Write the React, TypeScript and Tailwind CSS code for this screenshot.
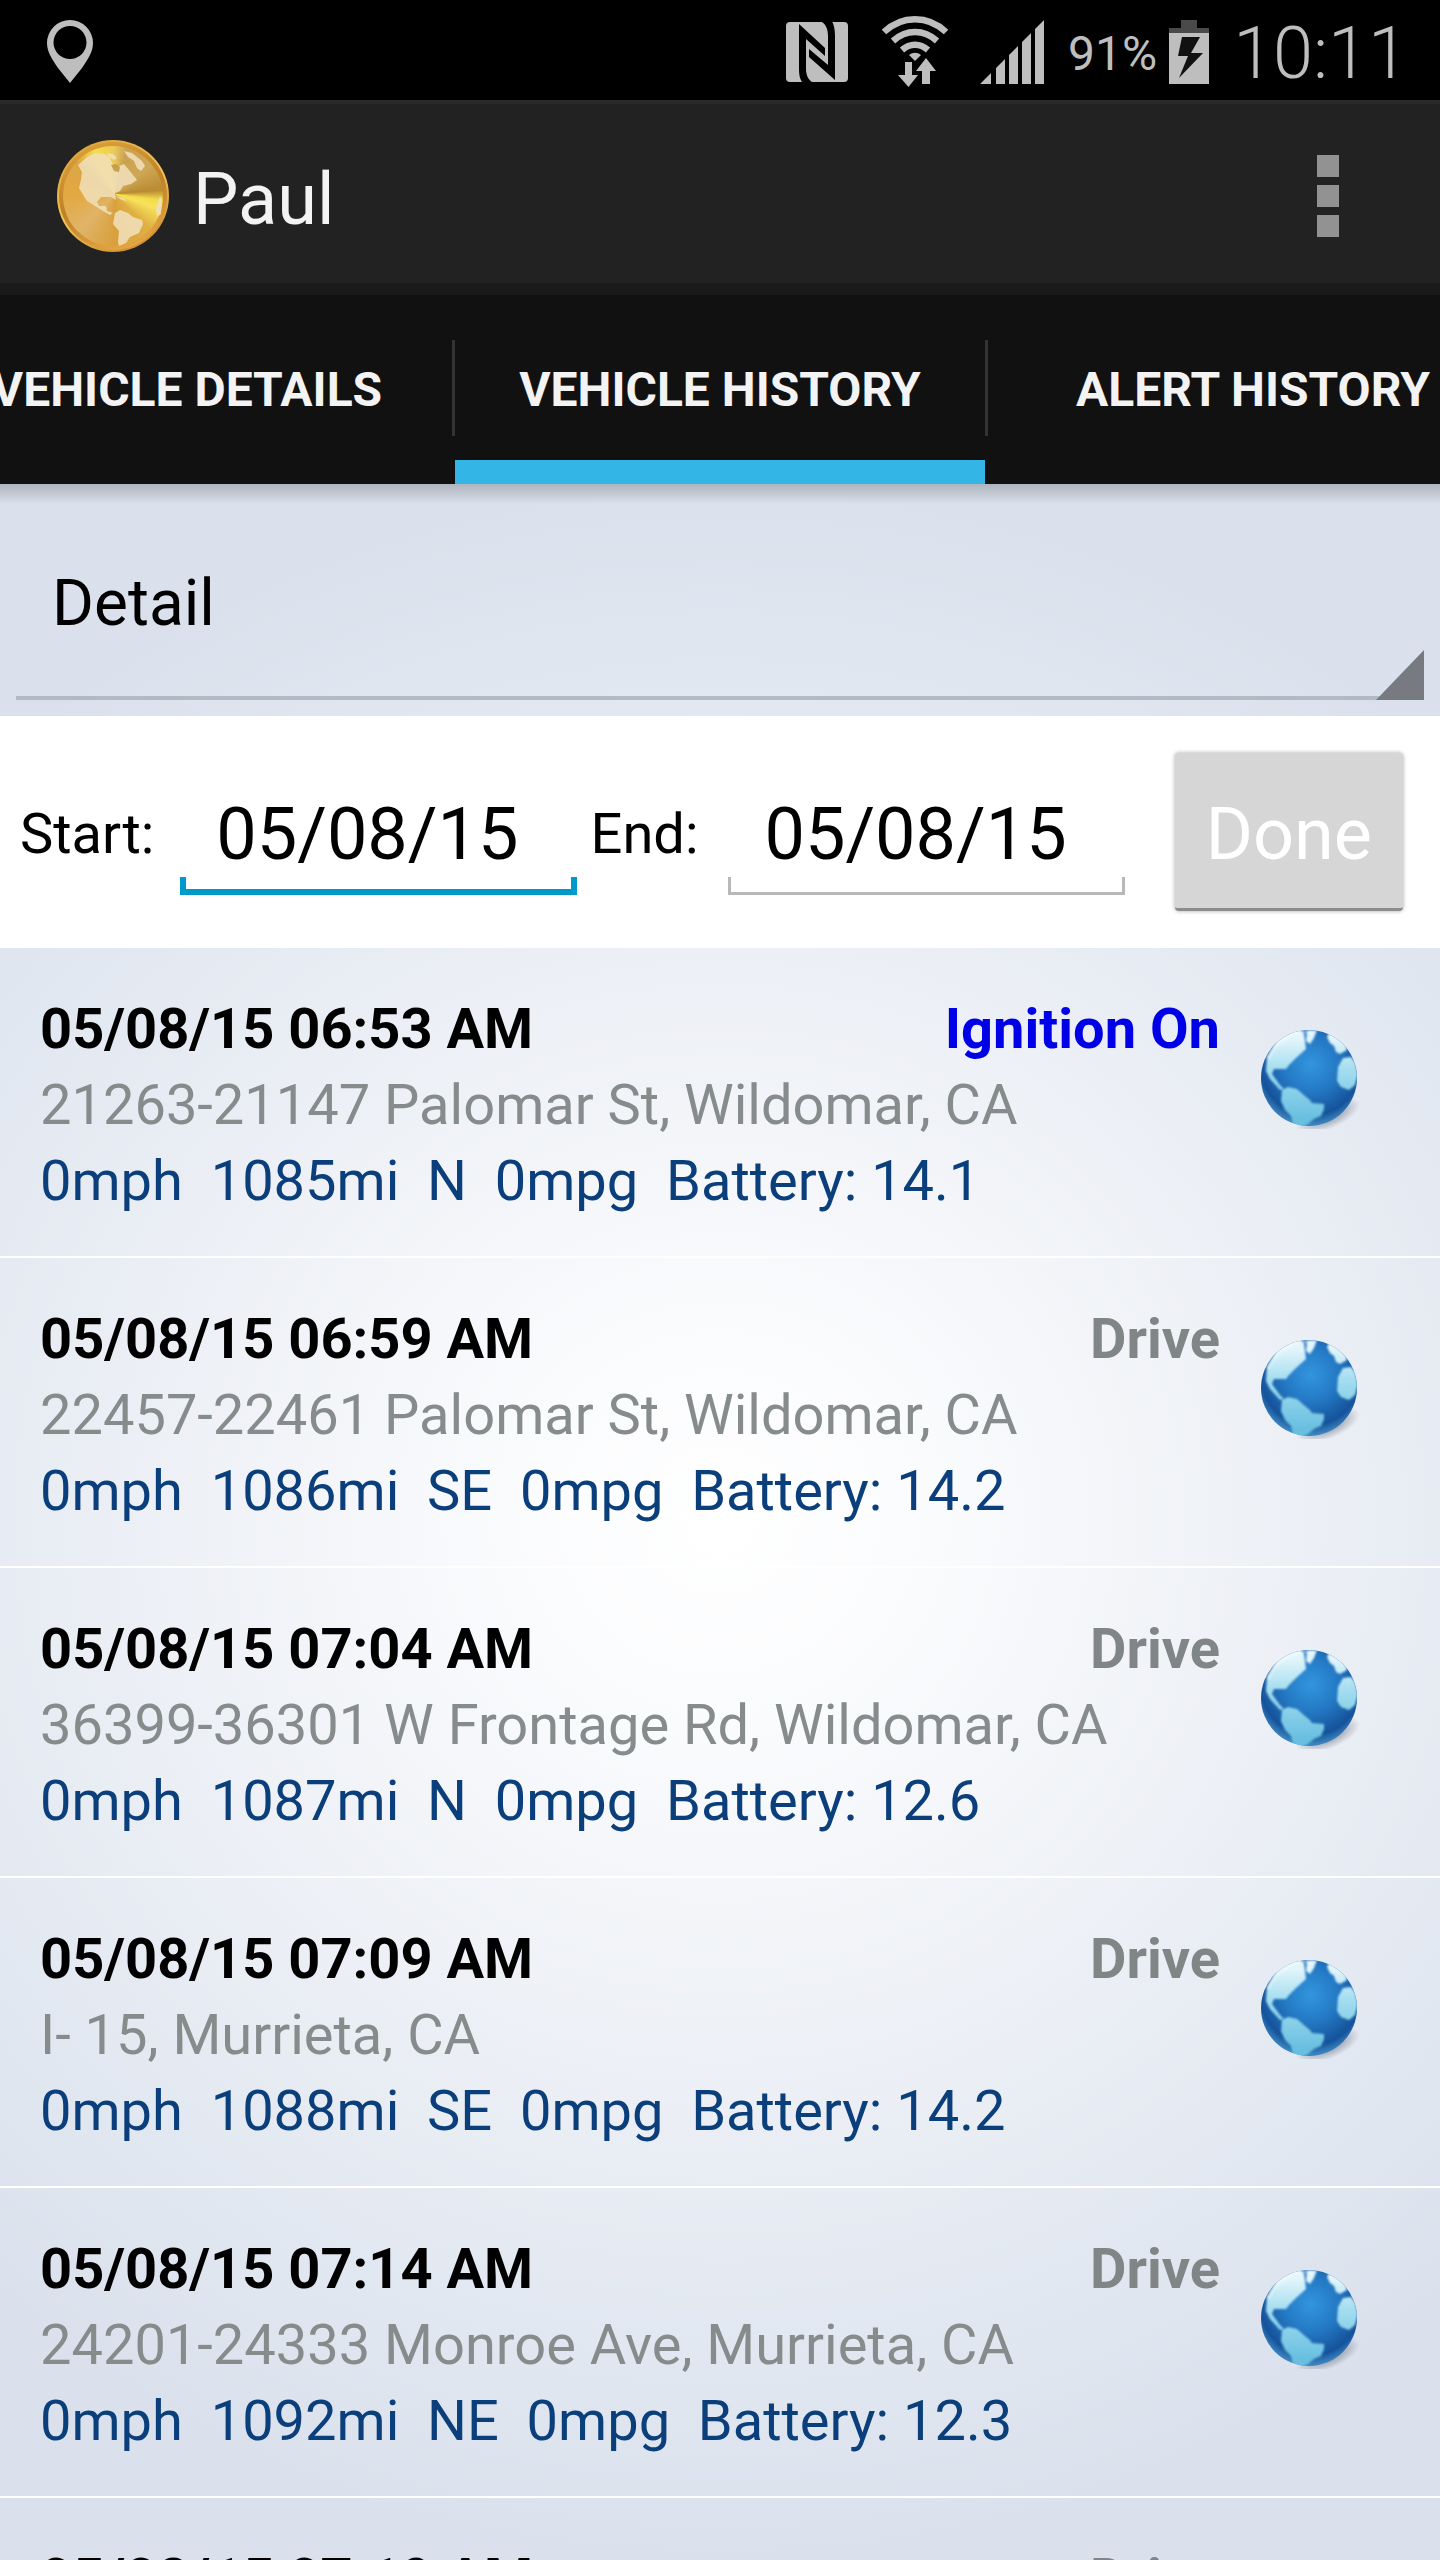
import { useState } from "react";

const tabs = ["Vehicle Details", "Vehicle History", "Alert History"];

const history = [
  { time: "05/08/15 06:53 AM", event: "Ignition On", address: "21263-21147 Palomar St, Wildomar, CA", stats: ["0mph", "1085mi", "N", "0mpg", "Battery: 14.1"] },
  { time: "05/08/15 06:59 AM", event: "Drive", address: "22457-22461 Palomar St, Wildomar, CA", stats: ["0mph", "1086mi", "SE", "0mpg", "Battery: 14.2"] },
  { time: "05/08/15 07:04 AM", event: "Drive", address: "36399-36301 W Frontage Rd, Wildomar, CA", stats: ["0mph", "1087mi", "N", "0mpg", "Battery: 12.6"] },
  { time: "05/08/15 07:09 AM", event: "Drive", address: "I- 15, Murrieta, CA", stats: ["0mph", "1088mi", "SE", "0mpg", "Battery: 14.2"] },
  { time: "05/08/15 07:14 AM", event: "Drive", address: "24201-24333 Monroe Ave, Murrieta, CA", stats: ["0mph", "1092mi", "NE", "0mpg", "Battery: 12.3"] },
  { time: "05/08/15 07:19 AM", event: "Drive", address: "", stats: [] },
];

function StatusBar() {
  return (
    <div className="flex h-[100px] shrink-0 items-center bg-black pt-1 pr-8 pl-[46px] text-[#bebebe]">
      <svg width="48" height="64" viewBox="0 0 48 64" fill="currentColor">
        <path fillRule="evenodd" d="M24 0a23 23 0 0 1 23 23c0 9-5 16-11 25L24 63 12 48C6 39 1 32 1 23A23 23 0 0 1 24 0zm0 6a16.500 16.500 0 1 0 0 33 16.500 16.500 0 0 0 0-33z" />
      </svg>

      <div className="ml-auto flex items-center gap-6">
        <div className="flex items-center gap-8">
          {/* NFC */}
          <svg width="64" height="62" viewBox="0 0 64 62">
            <rect x="0" y="1" width="62" height="60" rx="4" fill="currentColor" />
            <path d="M13 3l26 24v8L20 18v30c0 7 3 12 8 14H17c-3-3-4-8-4-14z" fill="#000" />
            <path d="M23 28l19 16V15c0-8-3-13-8-15h12c2 4 3 9 3 15v44L23 36z" fill="#000" />
          </svg>
          {/* Wi-Fi with traffic arrows */}
          <svg width="66" height="72" viewBox="0 0 66 72">
            <g fill="none" stroke="currentColor" strokeWidth="6.500">
              <path d="M2 16C20-1 46-1 64 16" />
              <path d="M11 25c13-12 31-12 44 0" />
              <path d="M20 34c8-7 18-7 26 0" />
            </g>
            <g fill="currentColor">
              <path d="M27 39c4-3 8-3 12 0l-6 6z" />
              <path d="M23 46h7v13h6L26.500 71 16 59h7z" />
              <path d="M44 42l10 13h-6v13h-8V55h-6z" />
            </g>
          </svg>
          <svg width="64" height="64" viewBox="0 0 64 64" fill="currentColor">
            <path d="M0 64L11 53v11zM16 48l9-9v25h-9zM29 35l9-9v38h-9zM42 22l9-9v51h-9zM55 9l9-9v64h-9z" />
          </svg>
        </div>
        <div className="flex items-center gap-3">
          <span className="pt-1 text-5xl">91%</span>
          <svg width="40" height="64" viewBox="0 0 40 64">
            <path d="M12 0h16v8h12v5H0V8h12z" fill="#4a4a4a" />
            <path d="M0 13h40v51H0z" fill="currentColor" />
            <path d="M13 17h18l-9 16h12L10 58l9-22H9z" fill="#111" />
          </svg>
        </div>
        <span className="pt-1 text-7xl font-light">10:11</span>
      </div>
    </div>
  );
}

function GoldGlobe() {
  return (
    <div className="size-28 rounded-full bg-linear-150 from-[#d99a33] via-[#f0c75a] to-[#c67c1e] p-[2px]">
      <div className="size-full rounded-full bg-linear-160 from-[#e0a53c] via-[#c08026] to-[#eeb04c] p-[4px]">
        <div className="size-full rounded-full bg-[conic-gradient(from_0deg_at_52%_48%,#e9c75c_0deg,#c9a152_15deg,#cfa856_50deg,#b98b32_85deg,#f3dc4c_98deg,#f7e35a_108deg,#dfb044_135deg,#d9a03c_180deg,#e0b468_225deg,#e2a942_270deg,#dba545_310deg,#f6dc4f_335deg,#f1d14f_350deg,#e9c75c_360deg)]">
          <svg className="size-full" viewBox="6 6 100 100" fill="#f0dfb8" fillOpacity="0.88">
            <path d="M21 25L30 17 38 13 48 14 53 18 57 27 62 26 67 24 72 30 80 40 74 44 66 46 63 51 58 53 59 60 54 57 44 57 40 62 42 66 49 66 50 71 56 73 53 75 46 71 38 66 30 61 28 58 22 48 24 40 25 32z" />
            <path d="M58 73l5-3 8 3 5 4 9 3 1 4-4 9-9 4-4 6-7 3-1-4 1-11-6-7z" />
            <path d="M67 11l8 2 10 8 3 5-4 5-4-3-3-7-6-4z" />
            <path d="M50 13l6 1 4 4-3 2-5-3zM58 56l8 2 4 3-5-1zM103 56l2 3-1 15-4 3-1-8z" />
            <path d="M54 25l5-1 4 3-1 5-5-1z" fill="#c19842" />
          </svg>
        </div>
      </div>
    </div>
  );
}

function BlueGlobe() {
  return (
    <svg width="100" height="100" viewBox="0 0 100 100">
      <defs>
        <radialGradient id="sea" cx="0.52" cy="0.36" r="0.62">
          <stop offset="0" stopColor="#3295dd" />
          <stop offset="0.450" stopColor="#2479c4" />
          <stop offset="0.850" stopColor="#15539b" />
          <stop offset="1" stopColor="#3b83bd" />
        </radialGradient>
        <linearGradient id="land" x1="0" y1="0" x2="0" y2="100" gradientUnits="userSpaceOnUse">
          <stop offset="0.100" stopColor="#e2f5fb" />
          <stop offset="0.400" stopColor="#a5def0" />
          <stop offset="0.900" stopColor="#68bfe0" />
        </linearGradient>
        <radialGradient id="shade">
          <stop offset="0" stopColor="#5f6878" stopOpacity="0.800" />
          <stop offset="1" stopColor="#5f6878" stopOpacity="0" />
        </radialGradient>
        <filter id="soft"><feGaussianBlur stdDeviation="1.200" /></filter>
        <clipPath id="ball"><circle cx="49" cy="49" r="48" /></clipPath>
      </defs>
      <ellipse cx="68" cy="86" rx="34" ry="14" fill="url(#shade)" transform="rotate(-22 68 86)" />
      <circle cx="49" cy="49" r="48" fill="url(#sea)" />
      <g clipPath="url(#ball)">
        <g fill="url(#land)" filter="url(#soft)">
          <path d="M6 42L7 28 18 9 37-1 44 4 46 20 36 29 29 36 26 40 14 40 12 45 20 56 24 60 20 61 10 50z" />
          <path d="M47 2l10-1-3 8-4 6-4-3zM70 2l7 3 9 11 1 5-7 4-4-2-2-6-4-3-3-6z" />
          <path d="M83 29l8-1 4 5 3 12-3 11-6 5-8-3-4-6 1-14z" />
          <path d="M22 61l6-3 9 2 8 7 5 4 2 3 12 1 0 5-3 7-7 3-6 5-8 4-7-3-2-9-6-6-4-9z" />
        </g>
        <path d="M8 30C16 9 36 1 53 3" fill="none" stroke="#fff" strokeOpacity="0.400" strokeWidth="3" filter="url(#soft)" />
      </g>
    </svg>
  );
}

function DateField({ id, label, active }: { id: string; label: string; active?: boolean }) {
  const [value, setValue] = useState("05/08/15");
  return (
    <>
      <label htmlFor={id} className="shrink-0 pt-1 text-[56px] leading-[76px]">{label}</label>
      <div className={`mt-6 min-w-0 flex-1 ${active ? "mr-[14px] ml-[26px]" : "mr-[50px] ml-[30px]"}`}>
        <input
          id={id}
          type="text"
          value={value}
          onChange={(e) => setValue(e.target.value)}
          className="block w-full bg-transparent pl-9 text-7xl leading-[84px] outline-none"
        />
        <div className={`h-[18px] ${active ? "border-6 border-[#0099cc]" : "border-3 border-[#b8b8b8]"} border-t-0`} />
      </div>
    </>
  );
}

export default function App() {
  const [tab, setTab] = useState(1);

  return (
    <div className="flex h-screen flex-col overflow-hidden font-['Roboto',sans-serif] text-black">
      <StatusBar />

      <header className="flex h-[195px] shrink-0 items-center gap-6 border-t-4 border-b-12 border-t-[#2a2a2a] border-b-[#1a1a1a] bg-[#222] pt-1 pr-[89px] pl-[57px]">
        <GoldGlobe />
        <h1 className="pt-2 text-7xl text-[#f3f3f3]">Paul</h1>
        <button aria-label="More options" className="ml-auto flex flex-col gap-2 px-3">
          <span className="size-[22px] bg-[#929292]" />
          <span className="size-[22px] bg-[#929292]" />
          <span className="size-[22px] bg-[#929292]" />
        </button>
      </header>

      <nav className="flex h-[189px] shrink-0 justify-center overflow-hidden bg-[#111]">
        {tabs.map((t, i) => (
          <div key={t} className="flex shrink-0">
            {i > 0 && <div className="mt-[45px] h-24 w-[3px] bg-[#333]" />}
            <button
              onClick={() => setTab(i)}
              className={`w-[530px] border-b-24 pt-6 text-5xl font-bold text-[#f3f3f3] uppercase ${tab === i ? "border-[#33b5e5]" : "border-transparent"}`}
            >
              {t}
            </button>
          </div>
        ))}
      </nav>

      <main className="flex min-h-0 flex-1 flex-col bg-[radial-gradient(ellipse_75%_50%_at_50%_50%,#ffffff_0%,#fafbfd_20%,#eceff5_55%,#dfe6f0_85%,#dae1ec_100%)]">
        <div className="shrink-0 bg-linear-to-b from-black/20 to-transparent to-[20px] px-4 pt-6 pb-4">
          <div className="relative">
            <select
              aria-label="Report type"
              className="block h-[192px] w-full appearance-none border-b-4 border-[#b3bac6] bg-transparent pt-1 pl-9 text-[64px] outline-none"
            >
              <option>Detail</option>
            </select>
            <svg className="pointer-events-none absolute right-0 bottom-0" width="48" height="50" viewBox="0 0 48 50">
              <path d="M48 0v50H0z" fill="#777a80" />
            </svg>
          </div>
        </div>

        <form className="flex h-[232px] shrink-0 items-center bg-white pr-[37px] pl-5" onSubmit={(e) => e.preventDefault()}>
          <DateField id="start" label="Start:" active />
          <DateField id="end" label="End:" />
          <button className="h-[158px] shrink-0 rounded-sm border-b-3 border-[#8c8c8c] bg-[#d6d6d6] px-[31px] pt-2 text-7xl text-white shadow-[0_0_4px_rgba(0,0,0,0.35)]">
            Done
          </button>
        </form>

        <ul className="min-h-0 flex-1 overflow-y-auto [scrollbar-width:none]">
          {history.map((h) => (
            <li key={h.time} className="flex h-[310px] gap-10 border-b-2 border-white pt-[43px] pr-20 pl-10">
              <div className="min-w-0 flex-1 text-[56px] leading-[76px] whitespace-pre">
                <div className="flex justify-between font-bold">
                  <span>{h.time}</span>
                  <span className={h.event === "Drive" ? "text-[#808586]" : "text-[#0000e6]"}>{h.event}</span>
                </div>
                <p className="text-[#868c8c]">{h.address}</p>
                <p className="text-[#0b3f7c]">{h.stats.join("  ")}</p>
              </div>
              <button aria-label="Show on map" className="mt-[38px] size-[100px] shrink-0">
                <BlueGlobe />
              </button>
            </li>
          ))}
        </ul>
      </main>
    </div>
  );
}
